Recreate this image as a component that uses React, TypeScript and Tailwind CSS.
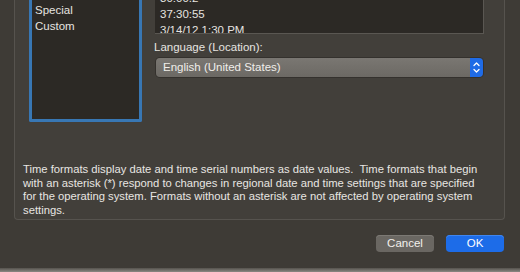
export default function App() {
  return (
    <div className="w-[520px] h-[272px] overflow-hidden bg-[#3e3b36] flex flex-col font-['Liberation_Sans',Arial,sans-serif] text-[11.5px] text-[#e6e4e0] antialiased">
      {/* Group box */}
      <div className="ml-[14px] w-[491px] h-[220px] shrink-0 flex flex-col bg-[#423f3a] border-x border-b border-[#56534e] rounded-b-[4px]">
        <div className="flex pl-[14px]">
          {/* Category list */}
          <div className="w-[113px] h-[122px] border-x-[3px] border-b-[3px] border-[#3877b4] rounded-b-[2px] bg-[#2c2925] pl-[3px] pt-[2px] leading-[16px]">
            <div>Special</div>
            <div>Custom</div>
          </div>

          {/* Right column */}
          <div className="ml-[13px] flex flex-col">
            <div className="w-[329px] h-[34px] overflow-hidden bg-[#2c2925] border-r border-b border-[#5a5752] pl-[5px] leading-[16px]">
              <div className="-mt-[10px]">30:00.2</div>
              <div>37:30:55</div>
              <div>3/14/12 1:30 PM</div>
            </div>
            <div className="mt-[6px] leading-[14px] -ml-[1px]">Language (Location):</div>
            <div className="mt-[4px] ml-[1px] w-[327px] h-[19px] flex rounded-[4px] overflow-hidden shadow-[0_0_0_1px_#34312d]">
              <div className="flex-1 bg-gradient-to-b from-[#7a7772] to-[#6c6964] pl-[7px] leading-[19px] text-[#f0eeea]">
                English (United States)
              </div>
              <div className="w-[13px] bg-[#1f6be6] flex items-center justify-center">
                <svg width="9" height="13" viewBox="0 0 9 13" fill="none" stroke="white" strokeWidth="1.3" strokeLinecap="round" strokeLinejoin="round">
                  <path d="M2 4.5 4.5 2 7 4.5" />
                  <path d="M2 8.5 4.5 11 7 8.5" />
                </svg>
              </div>
            </div>
          </div>
        </div>

        {/* Description */}
        <p className="mt-auto mb-[2px] pl-[8px] text-[11.25px] leading-[13.5px] text-[#e8e6e2]">
          Time formats display date and time serial numbers as date values.&nbsp; Time formats that begin
          <br />
          with an asterisk (*) respond to changes in regional date and time settings that are specified
          <br />
          for the operating system. Formats without an asterisk are not affected by operating system
          <br />
          settings.
        </p>
      </div>

      {/* Buttons */}
      <div className="mt-[15px] flex justify-end gap-[12px] pr-[16px]">
        <button className="w-[58px] h-[17px] rounded-[4px] bg-[#6a6762] shadow-[inset_0_1px_0_#7c7974] text-[#f2f0ec] leading-[17px]">
          Cancel
        </button>
        <button className="w-[58px] h-[17px] rounded-[4px] bg-[#1d6ce8] shadow-[inset_0_1px_0_#3f86f0] text-white leading-[17px]">
          OK
        </button>
      </div>

      {/* Window edge below */}
      <div className="mt-auto h-[4px] bg-gradient-to-b from-[#55524d] to-[#8c8984]" />
    </div>
  )
}
